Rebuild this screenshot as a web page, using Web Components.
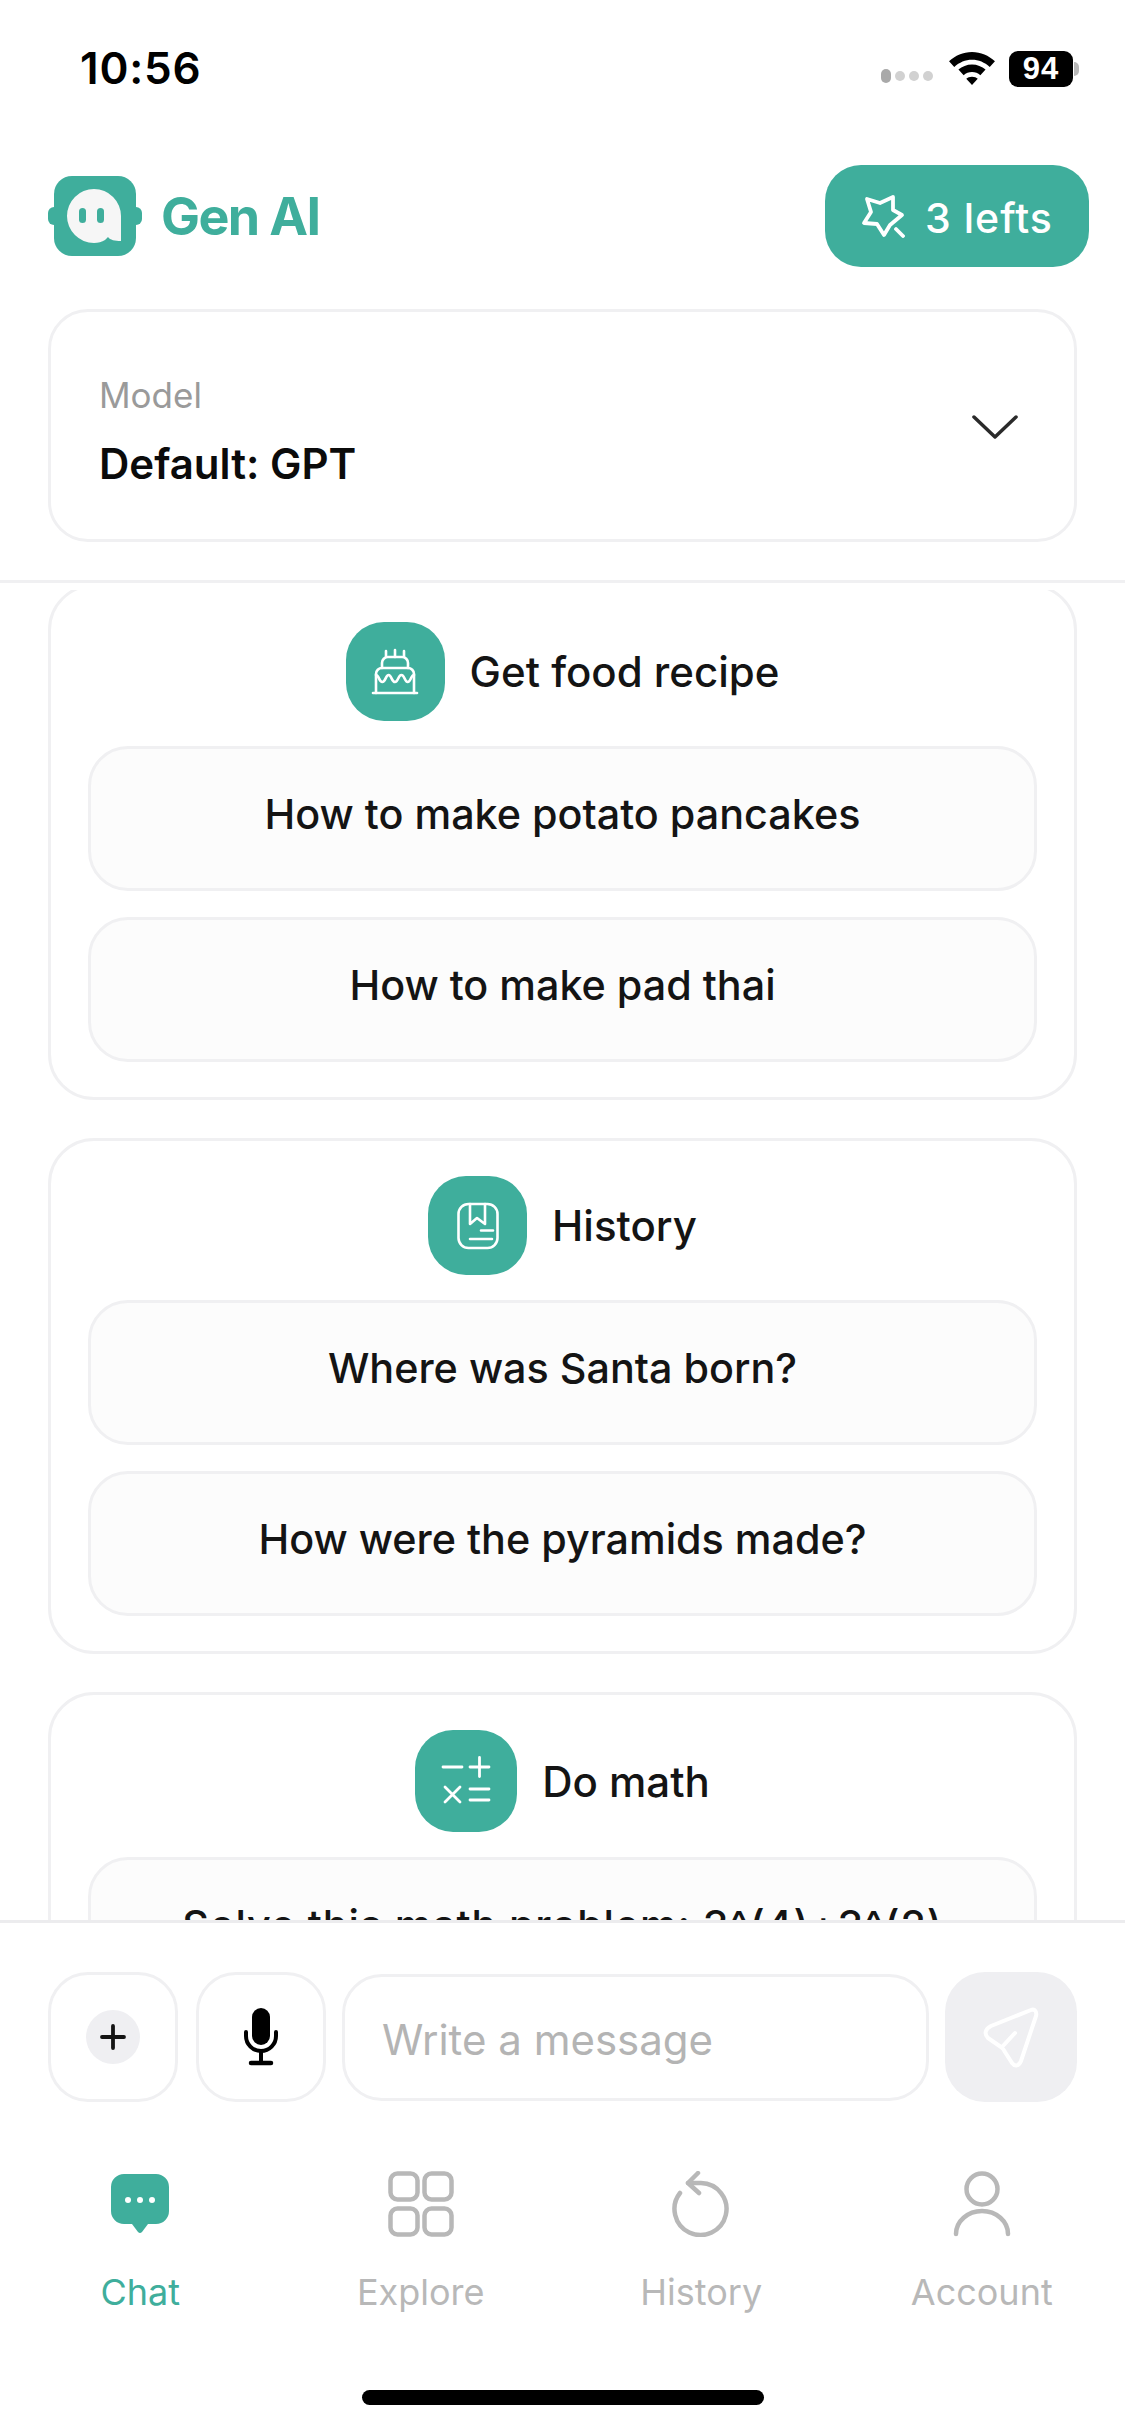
<!DOCTYPE html>
<html>
<head>
<meta charset="utf-8">
<title>Gen AI</title>
<style>
  html, body { margin: 0; padding: 0; background: #fff; }
  body { font-family: Inter, "Noto Sans", sans-serif; width: 1125px; height: 2436px; overflow: hidden; }
</style>
</head>
<body>
<chat-screen>
  <status-bar slot="top" time="10:56" battery="94"></status-bar>
  <app-header slot="top" credits="3 lefts"></app-header>
  <model-select slot="top" label="Model" value="Default: GPT"></model-select>

  <prompt-card title="Get food recipe" icon="cake">
    <prompt-item>How to make potato pancakes</prompt-item>
    <prompt-item>How to make pad thai</prompt-item>
  </prompt-card>
  <prompt-card title="History" icon="book">
    <prompt-item>Where was Santa born?</prompt-item>
    <prompt-item>How were the pyramids made?</prompt-item>
  </prompt-card>
  <prompt-card title="Do math" icon="math" badge="102">
    <prompt-item style="letter-spacing: .85px">Solve this math problem: 3^(4)+3^(2)</prompt-item>
  </prompt-card>

  <message-bar slot="bottom" placeholder="Write a message"></message-bar>
  <tab-bar slot="bottom"></tab-bar>
</chat-screen>

<script>
const GREEN = '#3fae9c';

const ICONS = {
  cake: `<svg width="50" height="50" viewBox="0 0 50 50" fill="none" stroke="#fff" stroke-width="2.6" stroke-linecap="round" stroke-linejoin="round">
    <path d="M16 4v6M25 3v7M34 4v6"/>
    <path d="M12 21v-5a6 6 0 0 1 6-6h14a6 6 0 0 1 6 6v5"/>
    <path d="M6 46V27a6 6 0 0 1 6-6h26a6 6 0 0 1 6 6v19"/>
    <path d="M6 28c3 0 3 7 6.300 7s3.300-7 6.300-7 3 7 6.400 7 3-7 6.400-7 3 7 6.300 7 3-7 6.300-7"/>
    <path d="M3 46h44"/>
  </svg>`,
  book: `<svg width="50" height="50" viewBox="0 0 50 50" fill="none" stroke="#fff" stroke-width="2.6" stroke-linecap="round" stroke-linejoin="round">
    <rect x="5.500" y="3" width="39" height="44" rx="10"/>
    <path d="M17 3v20l7-6 8 6V3"/>
    <path d="M28 29.500h12M17 38h22"/>
  </svg>`,
  math: `<svg width="54" height="54" viewBox="0 0 54 54" fill="none" stroke="#fff" stroke-width="2.8" stroke-linecap="round">
    <path d="M4 13h19M31 13h19M40.500 3.500v19"/>
    <path d="M6 33l15 15M21 33L6 48"/>
    <path d="M31 35h19M31 46h19"/>
  </svg>`
};

// status bar at the very top
class StatusBar extends HTMLElement {
  connectedCallback() {
    const root = this.attachShadow({mode: 'open'});
    root.innerHTML = `
      <style>
        :host { display: flex; align-items: center; justify-content: space-between; height: 137px; padding: 0 52px 0 80px; box-sizing: border-box; }
        .time { font: 600 44px Inter, sans-serif; color: #000; letter-spacing: 0.8px; margin-top: -1px; }
        .right { display: flex; align-items: center; gap: 13px; }
        .dots { display: flex; align-items: center; gap: 4px; margin-top: 14px; margin-right: 2px; }
        .dots i { display: block; width: 10px; height: 10px; border-radius: 5px; background: #d1d1d1; }
        .dots i:first-child { width: 10px; height: 14px; background: #a9a9a9; }
        .batt { position: relative; width: 64px; height: 36px; background: #000; border-radius: 9px; color: #fff; font: 700 31px "Liberation Sans", sans-serif; display: flex; align-items: center; justify-content: center; letter-spacing: 1px; }
        .batt::after { content: ""; position: absolute; left: 65px; top: 11px; width: 5px; height: 14px; background: #b8b8b8; border-radius: 0 6px 6px 0; }
      </style>
      <div class="time">${ this.getAttribute('time') }</div>
      <div class="right">
        <div class="dots"><i></i><i></i><i></i><i></i></div>
        <svg width="48" height="35" viewBox="0 0 46 34" preserveAspectRatio="none">
          <path d="M23 1C14.500 1 7 4.500 1 10l5 5.500C11 11 16.500 8.500 23 8.500S35 11 40 15.500L45 10C39 4.500 31.500 1 23 1z"/>
          <path d="M23 13c-5 0-9.500 2-13 5l5 5.500c2.200-1.800 5-3 8-3s5.800 1.200 8 3l5-5.500c-3.500-3-8-5-13-5z"/>
          <path d="M23 25c-2.300 0-4.300.8-5.500 2L23 33l5.500-6c-1.200-1.200-3.200-2-5.500-2z"/>
        </svg>
        <div class="batt">${ this.getAttribute('battery') }</div>
      </div>
    `;
  }
}
customElements.define('status-bar', StatusBar);

class AppHeader extends HTMLElement {
  connectedCallback() {
    const root = this.attachShadow({mode: 'open'});
    root.innerHTML = `
      <style>
        :host { display: flex; align-items: center; justify-content: space-between; height: 102px; margin-top: 28px; padding: 0 36px 0 48px; }
        .brand { display: flex; align-items: center; gap: 19px; }
        .name { font: 700 52px Inter, sans-serif; color: ${ GREEN }; letter-spacing: -1.600px; }
        .credits { display: flex; align-items: center; justify-content: center; gap: 20px; width: 264px; height: 102px; border-radius: 36px; background: ${ GREEN }; color: #fff; font: 500 41px Inter, sans-serif; letter-spacing: 1px; }
        .credits span { padding-top: 4px; }
      </style>
      <div class="brand">
        <svg width="94" height="82" viewBox="0 0 94 82">
          <rect x="0" y="32" width="12" height="18" rx="6" fill="${ GREEN }"/>
          <rect x="82" y="32" width="12" height="18" rx="6" fill="${ GREEN }"/>
          <rect x="6" y="1" width="82" height="80" rx="18" fill="${ GREEN }"/>
          <path d="M46 14a27 27 0 0 0-27 27 27 27 0 0 0 27 27c4 0 8-1 11-3l3-3c2 3 7 4 13 4V41a27 27 0 0 0-27-27z" fill="#f6f6f6"/>
          <rect x="31" y="33" width="7" height="15" rx="3.500" fill="${ GREEN }"/>
          <rect x="49" y="33" width="7" height="15" rx="3.500" fill="${ GREEN }"/>
        </svg>
        <span class="name">Gen AI</span>
      </div>
      <div class="credits">
        <svg width="44" height="44" viewBox="0 0 44 44" fill="none" stroke="#fff" stroke-width="3.800" stroke-linecap="round" stroke-linejoin="round">
          <path d="M32 3L19 9 6 5l4 13-7 11 13 1 7 11 6-10 12-10-9-5z"/>
          <path d="M35 35l7 7"/>
        </svg>
        <span>${ this.getAttribute('credits') }</span>
      </div>
    `;
  }
}
customElements.define('app-header', AppHeader);

class ModelSelect extends HTMLElement {
  connectedCallback() {
    const root = this.attachShadow({mode: 'open'});
    root.innerHTML = `
      <style>
        :host { display: flex; align-items: center; justify-content: space-between; height: 233px; box-sizing: border-box; margin: 42px 48px 0; padding: 0 56px 0 48px; border: 3px solid #f0f0f2; border-radius: 40px; }
        .text { padding-top: 12px; }
        .label { font: 400 35px Inter, sans-serif; color: #9a9a9a; margin-bottom: 22px; }
        .value { font: 600 42px Inter, sans-serif; color: #0b0b0b; }
        svg { margin-top: 3px; }
      </style>
      <div class="text">
        <div class="label">${ this.getAttribute('label') }</div>
        <div class="value">${ this.getAttribute('value') }</div>
      </div>
      <svg width="46" height="26" viewBox="0 0 46 26" fill="none" stroke="#2a2a2a" stroke-width="3.500" stroke-linecap="round" stroke-linejoin="round"><path d="M2 3l21 20L44 3"/></svg>
    `;
  }
}
customElements.define('model-select', ModelSelect);

class PromptCard extends HTMLElement {
  connectedCallback() {
    const root = this.attachShadow({mode: 'open'});
    const icon = this.getAttribute('icon');
    const badge = this.getAttribute('badge') || 99;
    root.innerHTML = `
      <style>
        :host { display: block; box-sizing: border-box; height: 516px; border: 3px solid #f0f0f2; border-radius: 46px; padding: 35px 37px 0; }
        .head { display: flex; align-items: center; justify-content: center; gap: 25px; margin-bottom: 25px; }
        .badge { width: ${ badge }px; height: ${ badge }px; border-radius: 38px; background: ${ GREEN }; display: flex; align-items: center; justify-content: center; }
        .title { font: 500 42px Inter, sans-serif; color: #141414; }
        .list { display: flex; flex-direction: column; gap: 26px; }
      </style>
      <div class="head">
        <div class="badge">${ ICONS[icon] }</div>
        <div class="title">${ this.getAttribute('title') }</div>
      </div>
      <div class="list"><slot></slot></div>
    `;
  }
}
customElements.define('prompt-card', PromptCard);

class PromptItem extends HTMLElement {
  connectedCallback() {
    const root = this.attachShadow({mode: 'open'});
    root.innerHTML = `
      <style>
        :host { display: flex; align-items: center; justify-content: center; height: 145px; box-sizing: border-box; border: 3px solid #f0f0f2; border-radius: 40px; background: #fcfcfc; font: 500 41.300px Inter, sans-serif; color: #141414; padding-bottom: 10px; }
      </style>
      <slot></slot>
    `;
  }
}
customElements.define('prompt-item', PromptItem);

class MessageBar extends HTMLElement {
  connectedCallback() {
    const root = this.attachShadow({mode: 'open'});
    root.innerHTML = `
      <style>
        :host { display: flex; gap: 16px; height: 130px; padding: 0 48px; }
        .btn { flex: none; width: 130px; box-sizing: border-box; border: 3px solid #f0f0f2; border-radius: 40px; display: flex; align-items: center; justify-content: center; }
        .first { margin-right: 2px; }
        .plus { width: 54px; height: 54px; border-radius: 50%; background: #efeff2; display: flex; align-items: center; justify-content: center; }
        .input { flex: 1; box-sizing: border-box; margin: 2px 0 1px; border: 3px solid #f0f0f2; border-radius: 40px; display: flex; align-items: center; padding: 4px 0 0 37px; font: 400 42px Inter, sans-serif; color: #b4b4b4; }
        .send { width: 132px; border: 0; background: #efeff2; }
      </style>
      <div class="btn first">
        <div class="plus">
          <svg width="26" height="26" viewBox="0 0 26 26" stroke="#141414" stroke-width="3.800" stroke-linecap="round"><path d="M13 2v22M2 13h22"/></svg>
        </div>
      </div>
      <div class="btn">
        <svg width="36" height="60" viewBox="0 0 36 60" fill="none">
          <rect x="9" y="1" width="18" height="37" rx="9" fill="#000"/>
          <path d="M3 25v4a15 15 0 0 0 30 0v-4" stroke="#000" stroke-width="4" stroke-linecap="round"/>
          <path d="M18 44v12" stroke="#000" stroke-width="4"/>
          <path d="M8 56h20" stroke="#000" stroke-width="4.500" stroke-linecap="round"/>
        </svg>
      </div>
      <div class="input">${ this.getAttribute('placeholder') }</div>
      <div class="btn send">
        <svg width="60" height="62" viewBox="0 0 60 62" fill="none" stroke="#fff" stroke-width="4" stroke-linejoin="round" stroke-linecap="round">
          <path d="M50 4L10 20c-6 3-7 8-3 12l13 9c2 1.500 3 3 4 5l7 11c3 4 7 3 9-2L55 10c1-4-1-7.500-5-6z"/>
          <path d="M21 41l13-14"/>
        </svg>
      </div>
    `;
  }
}
customElements.define('message-bar', MessageBar);

class TabBar extends HTMLElement {
  connectedCallback() {
    const root = this.attachShadow({mode: 'open'});
    const chat = `<svg style="margin-top: 2px" width="60" height="61" viewBox="0 0 60 61"><path d="M14 1h32a13 13 0 0 1 13 13v24a13 13 0 0 1-13 13h-8l-6 8a3 3 0 0 1-4 0l-6-8h-8A13 13 0 0 1 1 38V14A13 13 0 0 1 14 1z" fill="${ GREEN }"/><circle cx="18" cy="27" r="3" fill="#fff"/><circle cx="30" cy="27" r="3" fill="#fff"/><circle cx="42" cy="27" r="3" fill="#fff"/></svg>`;
    const grid = `<svg width="66" height="66" viewBox="0 0 66 66" fill="none" stroke="#b8b8b8" stroke-width="4.500"><rect x="2.500" y="2.500" width="27" height="26" rx="7"/><rect x="36.500" y="2.500" width="27" height="26" rx="7"/><rect x="2.500" y="37.500" width="27" height="26" rx="7"/><rect x="36.500" y="37.500" width="27" height="26" rx="7"/></svg>`;
    const hist = `<svg width="62" height="66" viewBox="0 0 62 66" fill="none" stroke="#b8b8b8" stroke-width="4.500" stroke-linecap="round" stroke-linejoin="round"><path d="M10 22A26 26 0 1 0 31 12H18"/><path d="M28 2L18 12l11 10"/></svg>`;
    const user = `<svg width="58" height="66" viewBox="0 0 58 66" fill="none" stroke="#b8b8b8" stroke-width="4.500" stroke-linecap="round"><circle cx="29" cy="18" r="15.500"/><path d="M3 63A26 23 0 0 1 55 63"/></svg>`;
    root.innerHTML = `
      <style>
        :host { display: grid; grid-template-columns: repeat(4, 1fr); margin-top: 69px; padding-right: 3px; }
        .tab { display: flex; flex-direction: column; align-items: center; font: 400 36px Inter, sans-serif; color: #b8b8b8; }
        .ico { height: 66px; display: flex; align-items: flex-start; margin-bottom: 33px; }
        .on { color: ${ GREEN }; }
      </style>
      <div class="tab on"><div class="ico">${ chat }</div>Chat</div>
      <div class="tab"><div class="ico">${ grid }</div>Explore</div>
      <div class="tab"><div class="ico">${ hist }</div>History</div>
      <div class="tab"><div class="ico">${ user }</div>Account</div>
    `;
  }
}
customElements.define('tab-bar', TabBar);

class ChatScreen extends HTMLElement {
  connectedCallback() {
    const root = this.attachShadow({mode: 'open'});
    root.innerHTML = `
      <style>
        :host { display: flex; flex-direction: column; height: 2436px; position: relative; }
        .top { flex: none; height: 580px; border-bottom: 3px solid #f0f0f2; }
        .clip { flex: none; height: 1330px; margin-top: 7px; overflow: hidden; }
        .scroll { display: flex; flex-direction: column; gap: 38px; margin-top: -6px; padding: 0 48px; }
        .bottom { flex: 1; border-top: 3px solid #ececee; padding-top: 49px; }
        .home { position: absolute; left: 362px; top: 2390px; width: 402px; height: 15px; border-radius: 8px; background: #000; }
      </style>
      <div class="top"><slot name="top"></slot></div>
      <div class="clip"><div class="scroll"><slot></slot></div></div>
      <div class="bottom"><slot name="bottom"></slot></div>
      <div class="home"></div>
    `;
  }
}
customElements.define('chat-screen', ChatScreen);
</script>
</body>
</html>
